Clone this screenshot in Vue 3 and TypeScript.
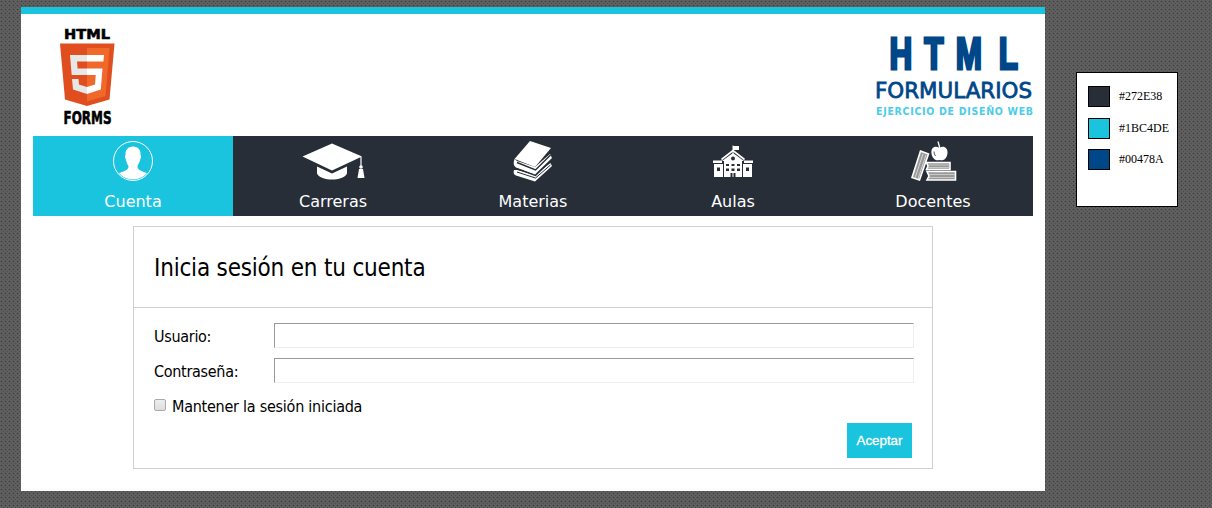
<script setup lang="ts">
interface NavItem { label: string; icon: string }
const items: NavItem[] = [
  { label: 'Cuenta', icon: 'user' },
  { label: 'Carreras', icon: 'cap' },
  { label: 'Materias', icon: 'books' },
  { label: 'Aulas', icon: 'school' },
  { label: 'Docentes', icon: 'teacher' },
]
const palette: string[] = ['#272E38', '#1BC4DE', '#00478A']
</script>

<template>
  <div class="screen">
    <main class="page">
      <header class="top">
        <svg class="badge" width="100" height="108" viewBox="33 20 100 108">
          <g class="badge-text">
            <text x="64" y="39" textLength="46" lengthAdjust="spacingAndGlyphs" font-size="14">HTML</text>
            <text class="narrow" x="63.5" y="123.5" textLength="48" lengthAdjust="spacingAndGlyphs" font-size="18">FORMS</text>
          </g>
          <path d="M60 43.5H114.5L109.5 99.5L87 106L65 99.5Z" fill="#e04e20" />
          <path d="M87 48H109.5L105.5 96L87 101.5Z" fill="#f0682a" />
          <path d="M70 55H87V61.500H77L77.600 68.500H87V75H71.700ZM72 79H78.500L79 84.500L87 87V94L73 89.500Z" fill="#e7e7e7" />
          <path d="M87 55H104L103.400 61.500H87ZM87 68.500H102.500L100.800 89.500L87 94V87L95 84.500L95.700 75H87Z" fill="#fff" />
        </svg>
        <svg class="brand" width="165" height="102" viewBox="870 20 165 102">
          <text class="title" transform="translate(870 68.5) scale(.7 1)" x="28 77.500 122.500 184" y="0">HTML</text>
          <text class="forms" x="875" y="97.5" font-size="22" textLength="157" lengthAdjust="spacingAndGlyphs">FORMULARIOS</text>
          <text class="tag" x="876" y="115" font-size="10.500" textLength="157" lengthAdjust="spacing">EJERCICIO DE DISEÑO WEB</text>
        </svg>
      </header>
      <nav class="nav">
        <a v-for="(item, i) in items" :key="item.label" class="tab" :class="{ active: i === 0 }">
          <svg width="80" height="50" viewBox="0 0 80 50" fill="#fff">
            <g v-if="item.icon === 'user'">
              <circle cx="40" cy="25" r="19.500" fill="none" stroke="#fff" />
              <path d="M40 10.500C45 10.500 48 14 47.500 19C48.500 19.500 48.300 22 47.200 23.500C46.500 27 45 28.500 44.500 30C44.500 34 47 34.500 54 37C47 45.500 33 45.500 26 37C33 34.500 35.500 34 35.500 30C34.500 28.500 33.500 27 33 23.500C31.800 22 31.500 19.500 32.600 19C32 14 35 10.500 40 10.500Z" />
            </g>
            <g v-else-if="item.icon === 'cap'">
              <path d="M9.500 20.500L39 7.500L69 20.500L39 34.500Z" />
              <path d="M24 30.500L39 37.500L54 30.500V37.500C50 45.500 28 45.500 24 37.500Z" />
              <path d="M68 21V30" stroke="#fff" stroke-width="1.200" /><circle cx="68" cy="31" r="1.800" /><path d="M66 33H70L71.500 42H64.500Z" />
            </g>
            <g v-else-if="item.icon === 'books'">
              <path d="M21 34C20 37 21 39 23 39.500L42 45.500L59 30L57.500 27L42 39L24 34Z" />
              <path d="M24 36L42.500 42L57.500 29" fill="none" stroke="#272e38" />
              <path d="M21.500 23C20 27 20.500 30 23 31.500L42 38.500L59 22L57 18L42 31L24 25Z" />
              <path d="M24 26.500L42.500 34L57.500 19" fill="none" stroke="#272e38" stroke-width="1.400" />
              <path d="M23 32.500L42.500 39.500L58.500 24" fill="none" stroke="#272e38" stroke-width="1.200" />
              <path d="M21.500 23L37 5L58 12L42 31Z" />
            </g>
            <g v-else-if="item.icon === 'school'">
              <path d="M40 19V9.500" stroke="#fff" />
              <path d="M40 10H46V14H40ZM29 25L40 17L51 25" /><path d="M28.500 23.500L40 14.500L51.500 23.500" fill="none" stroke="#fff" stroke-width="1.600" />
              <path d="M31 24H49V41H31ZM21 28H30V41H21ZM50 28H59V41H50ZM20 24.500H29V27H20ZM51 24.500H60V27H51Z" />
              <circle cx="40" cy="22.500" r="2" fill="#272e38" />
              <path fill="#272e38" d="M33 28H36V30H33ZM38.500 28H41.500V30H38.500ZM44 28H47V30H44ZM33 32.500H36V35H33ZM38.500 32.500H41.500V35H38.500ZM44 32.500H47V35H44ZM24 31.500H27V35H24ZM53 31.500H56V35H53ZM37.500 37H39.500V41H37.500ZM40.500 37H42.500V41H40.500Z" />
            </g>
            <g v-else>
              <path d="M27.500 15L35.500 18L26.500 44L19 41.500Z" fill="#999" stroke="#fff" stroke-width="1.600" />
              <path d="M30 18L22 42M33 19L25 43" stroke="#d5d5d5" />
              <path d="M33.500 26.500H57V33.500H33.500L35 30ZM34 35.500H62.500V44H34L36 40Z" fill="#999" stroke="#fff" stroke-width="1.600" />
              <path d="M35 29H57M35 31.500H57M36 38.500H62M36 41.500H62" stroke="#d5d5d5" stroke-width=".8" />
              <path d="M46.500 12C42 9 37.500 12 38.500 17.500C39 22 42.500 25.500 46.500 24C51 25.500 54 22 54.500 17C55 12 50.500 9 46.500 12Z" />
              <path d="M46.800 12L45 5.500" stroke="#fff" stroke-width="1.300" />
              <path d="M41 15.500Q41 18 42.500 20" fill="none" stroke="#272e38" stroke-width=".8" />
            </g>
          </svg>
          <span>{{ item.label }}</span>
        </a>
      </nav>
      <form class="card" @submit.prevent>
        <h1><span>Inicia sesión en tu cuenta</span></h1>
        <div class="fields">
          <label class="row"><span>Usuario:</span><input type="text" /></label>
          <label class="row"><span>Contraseña:</span><input type="password" /></label>
          <label class="keep"><input type="checkbox" /><span>Mantener la sesión iniciada</span></label>
          <button type="submit">Aceptar</button>
        </div>
      </form>
    </main>
    <aside class="palette">
      <div v-for="c in palette" :key="c" class="swatch"><i :style="{ background: c }"></i><span>{{ c }}</span></div>
    </aside>
  </div>
</template>

<style>
body { margin: 0; overflow: hidden; }
</style>
<style scoped>
* { box-sizing: border-box; }
.screen { width: 1212px; height: 508px; display: flex; align-items: flex-start; padding: 7px 0 0 21px; background-color: #646464; background-image: radial-gradient(circle at 1.500px 1.500px, #3f3f3f 0.700px, transparent 1.200px), radial-gradient(circle at 1.500px 1.500px, #4c4c4c 0.700px, transparent 1.200px); background-size: 4px 4px; background-position: 0 0, 2px 2px; }
.page { width: 1024px; height: 484px; padding: 0 12px; border-top: 7px solid #1bc4de; background: #fff; }
.top { height: 122px; display: flex; justify-content: space-between; padding-top: 6px; }
.brand { margin: 0 -2px 0 0; overflow: visible; }
.badge { overflow: visible; }
.badge-text { fill: #000; stroke: #000; stroke-width: .6; font-family: "DejaVu Sans", sans-serif; font-weight: 700; }
.narrow { font-family: "DejaVu Sans Condensed", sans-serif; font-stretch: condensed; }
.title { fill: #00478a; stroke: #00478a; stroke-width: 3; font: 700 45px "Liberation Sans", Arial, sans-serif; }
.forms { fill: #00478a; stroke: #00478a; stroke-width: .8; font-family: "DejaVu Sans", sans-serif; }
.tag { fill: #4dcce6; font-family: "DejaVu Sans Condensed", "DejaVu Sans", sans-serif; font-stretch: condensed; font-weight: 700; }
.nav { height: 80px; display: flex; background: #272e38; }
.tab { width: 200px; display: flex; flex-direction: column; align-items: center; color: #fff; font: 16px/22px "DejaVu Sans", sans-serif; }
.tab span { margin-top: 5px; }
.tab.active { background: #1bc4de; }
.card { width: 800px; height: 243px; margin: 10px auto 0; border: 1px solid #d0d0d0; color: #000; font: 16px/25px "DejaVu Sans Condensed", "DejaVu Sans", sans-serif; font-stretch: condensed; }
h1 { margin: 0; height: 81px; padding-left: 20px; border-bottom: 1px solid #d0d0d0; font-size: 24px; line-height: 83px; font-weight: 400; letter-spacing: -.2px; }
.fields { display: flex; flex-direction: column; padding: 15px 18px 0 20px; }
.row { display: flex; height: 25px; margin-bottom: 10px; letter-spacing: -.3px; }
.row span { width: 120px; padding-top: 1px; }
.row input { width: 640px; height: 25px; border: 1px solid; border-color: #999 #eee #eee #999; background: #fff; padding: 0 4px; border-radius: 0; }
.keep { display: flex; align-items: center; height: 25px; letter-spacing: -.25px; }
.keep span { padding-top: 1px; }
.keep input { appearance: none; width: 12px; height: 12px; margin: 0 6px 1px 0; border: 1px solid #aaa; border-radius: 2px; background: linear-gradient(#eee, #ddd); }
.fields button { align-self: flex-end; width: 65px; height: 35px; margin: 5px 2px 0 0; padding: 0; border: 0; background: #1bc4de; color: #fff; font: 13.333px "Liberation Sans", Arial, sans-serif; -webkit-text-stroke: .3px #fff; }
.palette { width: 102px; height: 135px; margin: 65px 0 0 31px; border: 1px solid #000; padding: 13px 0 0 11px; background: #fff; }
.swatch { display: flex; height: 31.500px; font: 12px/21px "Liberation Serif", serif; color: #000; }
.swatch i { width: 22px; height: 21px; border: 1px solid #000; margin-right: 9px; }
</style>
